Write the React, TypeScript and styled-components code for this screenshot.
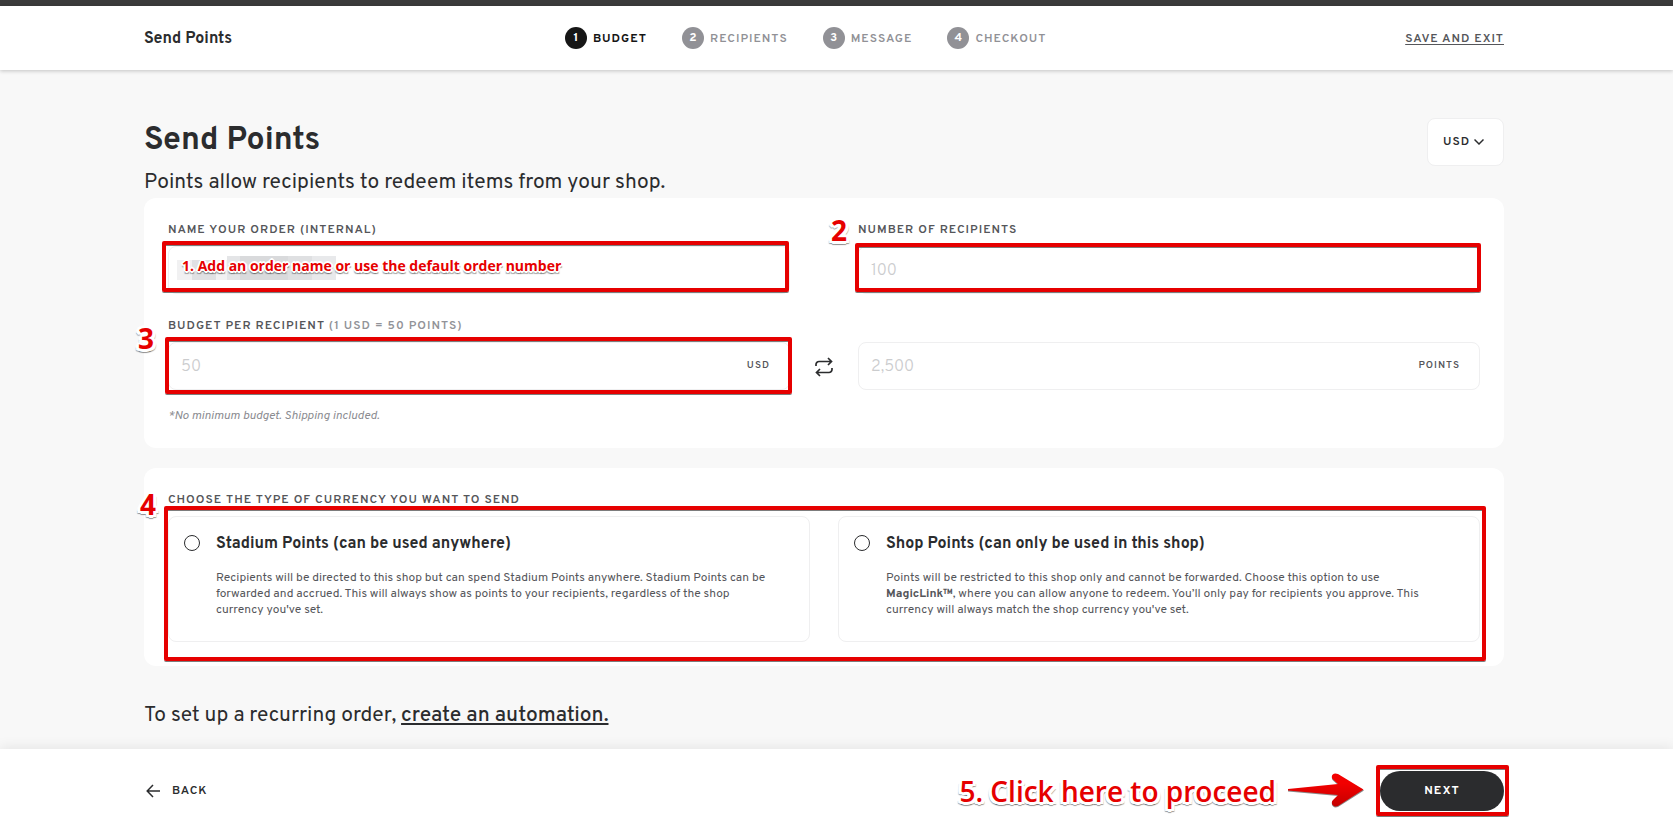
import React from "react";
import styled, { createGlobalStyle, css } from "styled-components";

const ink = "#2b2c2e";
const grey = "#55565a";
const line = "#efeff0";
const red = "#e60000";

const GlobalStyle = createGlobalStyle`
  *, *::before, *::after { box-sizing: border-box; }
  body {
    margin: 0;
    background: #f8f8f8;
    color: ${ink};
    font-family: Overpass, Roboto, sans-serif;
  }
  button, input, select { font: inherit; color: inherit; }
  h1, h2, p, ol, fieldset { margin: 0; padding: 0; border: 0; }
`;

const Page = styled.div`
  display: flex;
  flex-direction: column;
  min-height: 100vh;
`;

const gutters = css`
  padding-left: 144px;
  padding-right: 169px;
`;

const caps = css`
  font-size: 12px;
  line-height: 16px;
  letter-spacing: 1px;
  text-transform: uppercase;
`;

const TopStrip = styled.div`
  height: 6px;
  background: #3b3b3b;
`;

const Header = styled.header`
  ${gutters}
  display: flex;
  align-items: center;
  justify-content: space-between;
  height: 64px;
  background: #fff;
  box-shadow: 0 1px 4px rgba(0, 0, 0, 0.22);
`;

const HeaderTitle = styled.div`
  padding-top: 2px;
  font-size: 16px;
  line-height: 20px;
  font-weight: 700;
`;

const Steps = styled.ol`
  display: flex;
  gap: 35px;
  margin-right: 26px;
  list-style: none;
`;

const Step = styled.li<{ $active?: boolean }>`
  ${caps}
  display: flex;
  align-items: center;
  gap: 6px;
  font-weight: ${(p) => (p.$active ? 700 : 600)};
  color: ${(p) => (p.$active ? "#161616" : "#919196")};
`;

const StepNumber = styled.span<{ $active?: boolean }>`
  display: grid;
  place-items: center;
  width: 22px;
  height: 22px;
  border-radius: 50%;
  background: ${(p) => (p.$active ? "#161616" : "#919196")};
  color: #fff;
  font-weight: 700;
  letter-spacing: 0;
`;

const StepName = styled.span`
  padding-top: 2px;
`;

const ExitLink = styled.a`
  ${caps}
  padding-top: 2px;
  font-weight: 600;
  color: ${grey};
  text-underline-offset: 2px;
`;

const Main = styled.main`
  ${gutters}
  flex: 1;
  padding-top: 48px;
`;

const Intro = styled.div`
  display: flex;
  justify-content: space-between;
  align-items: flex-start;
  height: 80px;
`;

const Title = styled.h1`
  font-size: 32px;
  line-height: 40px;
  font-weight: 700;
`;

const Lead = styled.p`
  font-size: 21px;
  line-height: 24px;
`;

const IntroText = styled.div`
  display: flex;
  flex-direction: column;
  gap: 10px;
  padding-top: 3px;
`;

const CurrencyPicker = styled.div`
  position: relative;
  width: 77px;
  color: ${ink};

  svg {
    position: absolute;
    right: 20px;
    top: 20px;
    pointer-events: none;
  }
`;

const CurrencySelect = styled.select`
  ${caps}
  appearance: none;
  width: 100%;
  height: 48px;
  padding: 0 15px;
  border: 1px solid ${line};
  border-radius: 8px;
  background: #fff;
  font-weight: 600;
`;

const Card = styled.section`
  padding: 24px;
  border-radius: 12px;
  background: #fff;

  & + & { margin-top: 20px; }
`;

const FieldGrid = styled.div`
  display: grid;
  grid-template-columns: minmax(0, 1fr) 68px minmax(0, 1fr);
  row-gap: 24px;
  align-items: end;
`;

const Field = styled.div<{ $column?: number }>`
  position: relative;
  display: flex;
  flex-direction: column;
  gap: 8px;
  grid-column: ${(p) => p.$column ?? 1};
`;

const labelText = css`
  ${caps}
  font-weight: 600;
  color: ${grey};
`;

const Label = styled.label`
  ${labelText}
  span { color: #929398; }
`;

const Control = styled.div`
  position: relative;
`;

const TextInput = styled.input`
  display: block;
  width: 100%;
  height: 48px;
  padding: 2px 12px 0;
  border: 1px solid ${line};
  border-radius: 8px;
  background: #fff;
  font-size: 16px;
  line-height: 20px;

  &::placeholder {
    color: #cbccce;
    font-weight: 300;
    opacity: 1;
  }
`;

const Unit = styled.span`
  position: absolute;
  right: 20px;
  top: 17px;
  font-size: 10px;
  line-height: 14px;
  font-weight: 600;
  letter-spacing: 1px;
  color: ${grey};
`;

const SwapButton = styled.button`
  grid-column: 2;
  display: grid;
  place-items: center;
  height: 46px;
  padding: 0;
  border: 0;
  background: none;
`;

const Note = styled.p`
  padding-top: 18px;
  font-size: 12px;
  line-height: 16px;
  font-style: italic;
  color: #8b8c91;
`;

const Legend = styled.legend`
  ${labelText}
  padding: 0;
`;

const Options = styled.div`
  position: relative;
  display: grid;
  grid-template-columns: repeat(2, minmax(0, 1fr));
  gap: 28px;
  margin-top: 8px;
`;

const Option = styled.label`
  display: flex;
  gap: 16px;
  height: 126px;
  padding: 16px 15px;
  border: 1px solid ${line};
  border-radius: 8px;
`;

const Radio = styled.input`
  appearance: none;
  flex: none;
  width: 16px;
  height: 16px;
  margin: 2px 0;
  border: 1px solid ${ink};
  border-radius: 50%;

  &:checked { border-width: 5px; }
`;

const OptionBody = styled.span`
  padding-top: 1px;
`;

const OptionTitle = styled.span`
  display: block;
  font-size: 16px;
  line-height: 20px;
  font-weight: 700;
`;

const OptionText = styled.span`
  display: block;
  margin-top: 16px;
  font-size: 12px;
  line-height: 16px;
  color: ${grey};
`;

const Recurring = styled(Lead)`
  margin: 38px 0 21px;

  a {
    color: inherit;
    font-weight: 500;
    text-decoration-thickness: 2px;
    text-underline-offset: 2px;
  }
`;

const Footer = styled.footer`
  ${gutters}
  display: flex;
  align-items: center;
  justify-content: space-between;
  height: 83px;
  background: #fff;
  box-shadow: 0 -2px 12px rgba(0, 0, 0, 0.08);
`;

const BackButton = styled.button`
  ${caps}
  display: flex;
  align-items: center;
  gap: 12px;
  padding: 1px 0 0 2px;
  border: 0;
  background: none;
  font-weight: 600;
`;

const FooterActions = styled.div`
  display: flex;
  align-items: center;
`;

const NextWrap = styled.div`
  position: relative;
  margin-left: 16px;
`;

const NextButton = styled.button`
  ${caps}
  display: block;
  width: 124px;
  height: 40px;
  padding-top: 2px;
  border: 0;
  border-radius: 20px;
  background: ${ink};
  color: #fff;
  font-weight: 700;
`;

const outlined = css`
  font-family: "Open Sans", "Noto Sans", sans-serif;
  font-weight: 600;
  color: ${red};
`;

const largeHint = css`
  ${outlined}
  font-size: 28px;
  line-height: 32px;
  text-shadow:
    -2px -2px 0 #fff, 2px -2px 0 #fff, -2px 2px 0 #fff, 2px 2px 0 #fff,
    -3px 0 0 #fff, 3px 0 0 #fff, 0 -3px 0 #fff, 0 3px 0 #fff,
    -3px 2px 0 #fff, 3px 2px 0 #fff, 0 4px 1px rgba(0, 0, 0, 0.4),
    -3px 3px 1px rgba(0, 0, 0, 0.4), 3px 3px 1px rgba(0, 0, 0, 0.4);
`;

const Highlight = styled.div<{ $inset: string }>`
  position: absolute;
  inset: ${(p) => p.$inset};
  border: 4px solid ${red};
  border-radius: 2px;
  box-shadow: 0 1px 0 #7d7d7d, inset 0 1px 0 #7d7d7d;
  pointer-events: none;
`;

const Marker = styled.span<{ $left: number; $top: number }>`
  ${largeHint}
  position: absolute;
  left: ${(p) => p.$left}px;
  top: ${(p) => p.$top}px;
  font-weight: 700;
`;

const FieldHint = styled.span`
  ${outlined}
  position: absolute;
  left: 14px;
  top: 10px;
  font-size: 14px;
  line-height: 20px;
  font-weight: 700;
  white-space: nowrap;
  text-shadow:
    -1px -1px 0 #fff, 1px -1px 0 #fff, -1px 1px 0 #fff, 1px 1px 0 #fff,
    -2px 0 0 #fff, 2px 0 0 #fff, 0 -2px 0 #fff, 0 2px 0 #fff,
    1px 3px 1px rgba(0, 0, 0, 0.35), -1px 3px 1px rgba(0, 0, 0, 0.3);
`;

const Redaction = styled.svg`
  position: absolute;
  left: 9px;
  top: 10px;
`;

const ProceedHint = styled.span`
  ${largeHint}
  margin-right: 12px;
`;

const steps = ["Budget", "Recipients", "Message", "Checkout"];

const options = [
  {
    id: "stadium",
    title: "Stadium Points (can be used anywhere)",
    text: (
      <>
        Recipients will be directed to this shop but can spend Stadium Points anywhere. Stadium Points can be
        <br />
        forwarded and accrued. This will always show as points to your recipients, regardless of the shop
        <br />
        currency you've set.
      </>
    ),
  },
  {
    id: "shop",
    title: "Shop Points (can only be used in this shop)",
    text: (
      <>
        Points will be restricted to this shop only and cannot be forwarded. Choose this option to use
        <br />
        <b>MagicLink™</b>, where you can allow anyone to redeem. You’ll only pay for recipients you approve. This
        <br />
        currency will always match the shop currency you've set.
      </>
    ),
  },
];

export default function App() {
  return (
    <Page>
      <GlobalStyle />
      <TopStrip />
      <Header>
        <HeaderTitle>Send Points</HeaderTitle>
        <Steps>
          {steps.map((name, i) => (
            <Step key={name} $active={i === 0}>
              <StepNumber $active={i === 0}>{i + 1}</StepNumber>
              <StepName>{name}</StepName>
            </Step>
          ))}
        </Steps>
        <ExitLink href="#exit">Save and exit</ExitLink>
      </Header>

      <Main>
        <Intro>
          <IntroText>
            <Title>Send Points</Title>
            <Lead>Points allow recipients to redeem items from your shop.</Lead>
          </IntroText>
          <CurrencyPicker>
            <CurrencySelect aria-label="Currency">
              <option>USD</option>
            </CurrencySelect>
            <svg width="10" height="8" viewBox="0 0 10 8" fill="none" stroke="currentColor" strokeWidth="1.5">
              <path d="M0.500 1.500l4.500 4.500 4.500-4.500" />
            </svg>
          </CurrencyPicker>
        </Intro>

        <Card>
          <FieldGrid>
            <Field>
              <Label htmlFor="order">Name your order (internal)</Label>
              <Control>
                <TextInput id="order" />
                <Redaction width="159" height="24" viewBox="0 0 159 24" shapeRendering="crispEdges">
                  <path fill="#f1f1f2" d="M0 4h15v20H0zM39 4h11v20H39z" />
                  <path fill="#e0e1e3" d="M15 4h24v20H15z" />
                  <path fill="#e4e5e7" d="M50 0h13v24H50z" />
                  <path fill="#d9dadc" d="M63 0h48v24H63z" />
                  <path fill="#dfe0e2" d="M111 0h24v24h-24z" />
                  <path fill="#e8e9eb" d="M135 0h24v24h-24z" />
                </Redaction>
                <FieldHint>1. Add an order name or use the default order number</FieldHint>
                <Highlight $inset="-5px 1px 2px -6px" />
              </Control>
            </Field>
            <Field $column={3}>
              <Label htmlFor="recipients">Number of recipients</Label>
              <Control>
                <TextInput id="recipients" placeholder="100" />
                <Highlight $inset="-3px -1px 2px -3px" />
              </Control>
              <Marker $left={-27} $top={-8}>2</Marker>
            </Field>
            <Field>
              <Label htmlFor="budget">
                Budget per recipient <span>(1 USD = 50 points)</span>
              </Label>
              <Control>
                <TextInput id="budget" placeholder="50" />
                <Unit>USD</Unit>
                <Highlight $inset="-5px -2px -4px -3px" />
              </Control>
              <Marker $left={-30} $top={4}>3</Marker>
            </Field>
            <SwapButton aria-label="Swap currency and points">
              <svg width="18" height="20" viewBox="0 0 18 20" fill="none" stroke="currentColor" strokeWidth="1.7">
                <path d="M1 9V7.500a3 3 0 0 1 3-3h12M13 1l3.500 3.500L13 8M17 11v1.500a3 3 0 0 1-3 3H2M5 12l-3.500 3.500L5 19" />
              </svg>
            </SwapButton>
            <Field $column={3}>
              <Control>
                <TextInput aria-label="Points per recipient" placeholder="2,500" />
                <Unit>POINTS</Unit>
              </Control>
            </Field>
          </FieldGrid>
          <Note>*No minimum budget. Shipping included.</Note>
        </Card>

        <Card>
          <fieldset>
            <Legend>Choose the type of currency you want to send</Legend>
            <Options>
              {options.map((o) => (
                <Option key={o.id}>
                  <Radio type="radio" name="currency-type" value={o.id} />
                  <OptionBody>
                    <OptionTitle>{o.title}</OptionTitle>
                    <OptionText>{o.text}</OptionText>
                  </OptionBody>
                </Option>
              ))}
              <Highlight $inset="-10px -6px -19px -4px" />
              <Marker $left={-28} $top={-28}>4</Marker>
            </Options>
          </fieldset>
        </Card>

        <Recurring>
          To set up a recurring order, <a href="#automation">create an automation.</a>
        </Recurring>
      </Main>

      <Footer>
        <BackButton>
          <svg width="14" height="14" viewBox="0 0 14 14" fill="none" stroke="currentColor" strokeWidth="1.5">
            <path d="M14 7H1.500M7 1L1.200 7 7 13" />
          </svg>
          Back
        </BackButton>
        <FooterActions>
          <ProceedHint>5. Click here to proceed</ProceedHint>
          <svg width="76" height="35" viewBox="0 0 76 35">
            <defs>
              <linearGradient id="arrow" x1="0" y1="0" x2="0" y2="1">
                <stop offset="0.3" stopColor="#f20000" />
                <stop offset="1" stopColor="#c40000" />
              </linearGradient>
            </defs>
            <path d="M0 17L50 12 45 7.500C42 4 45 0 50 2L76 17.500 50 34C45 36 42 31 45 28L50 23 0 18.500z" fill="#8a8a8a" />
            <path d="M0 16L50 11 45 6.500C42 3 45 -1 50 1L75.500 16.500 50 33C45 35 42 30 45 27L50 22 0 17.500z" fill="url(#arrow)" />
          </svg>
          <NextWrap>
            <NextButton>Next</NextButton>
            <Highlight $inset="-6px -5px -5px -4px" />
          </NextWrap>
        </FooterActions>
      </Footer>
    </Page>
  );
}
